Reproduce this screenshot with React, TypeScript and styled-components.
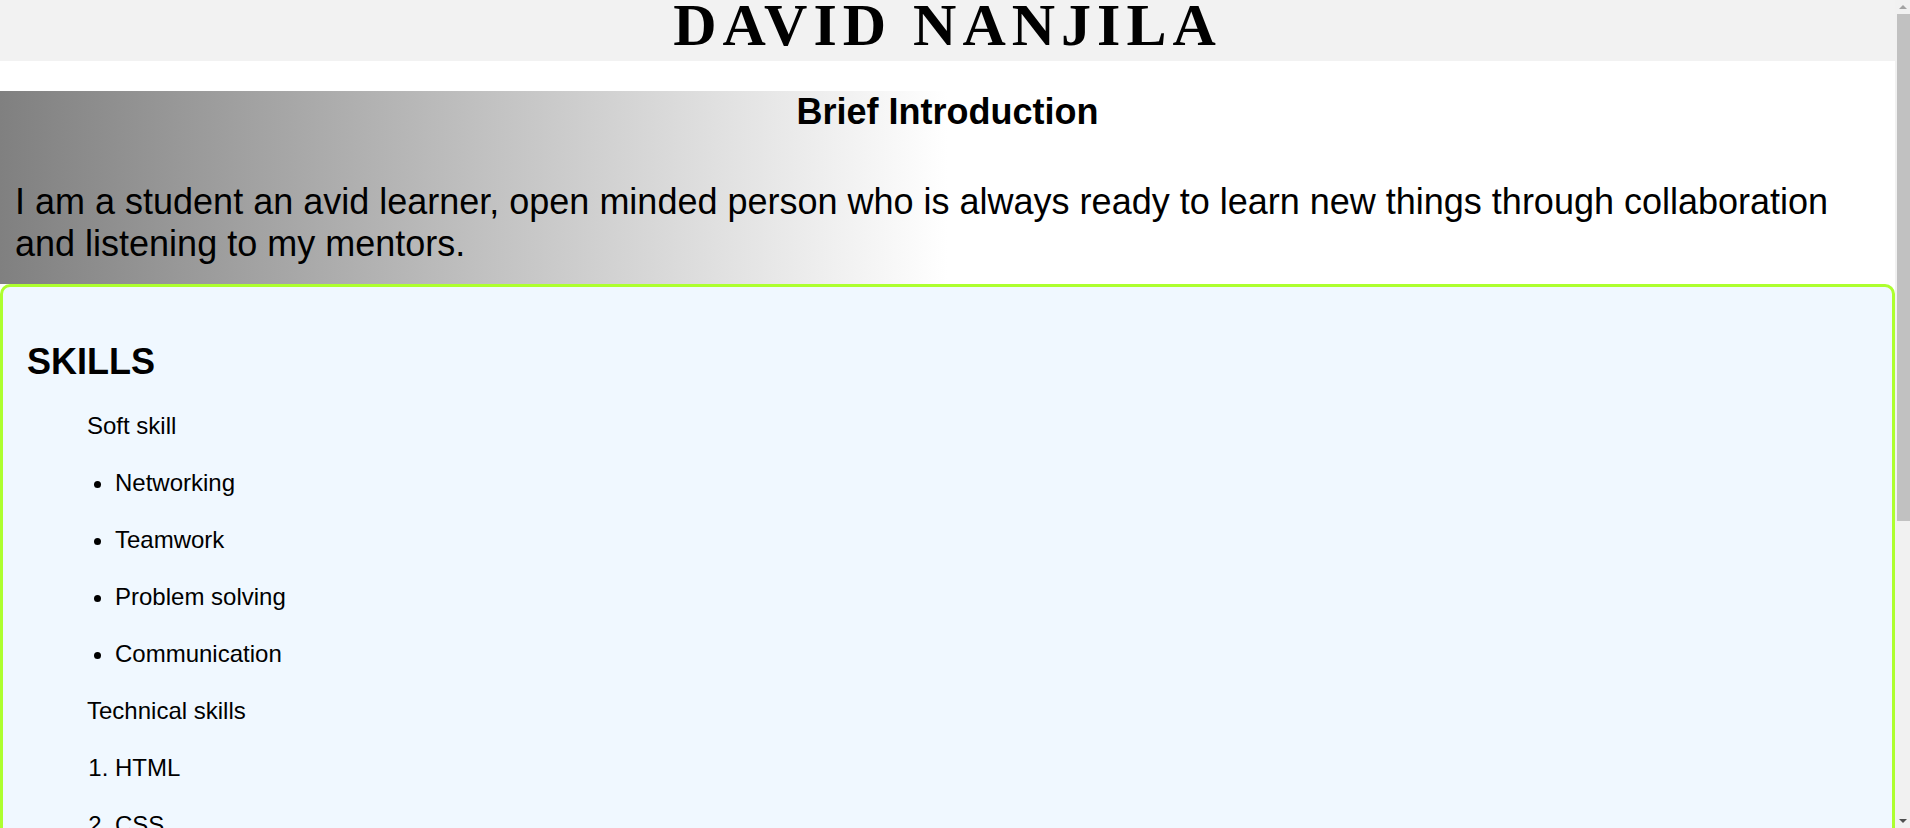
import React from "react";
import styled, { createGlobalStyle } from "styled-components";

const GlobalStyle = createGlobalStyle`
  html, body {
    margin: 0;
    padding: 0;
    background: #ffffff;
  }
  body {
    font-family: "Liberation Sans", Arial, sans-serif;
    color: #000000;
  }
`;

const Page = styled.div`
  margin-right: 15px;
`;

const Header = styled.header`
  background: #f2f2f2;
  height: 61px;
  box-sizing: border-box;
  padding-bottom: 10px;
`;

const Name = styled.h1`
  margin: 0;
  font-family: "Liberation Serif", "Times New Roman", serif;
  font-weight: 700;
  font-size: 60px;
  line-height: 51px;
  letter-spacing: 6px;
  text-align: center;
`;

const Intro = styled.section`
  margin-top: 30px;
  padding-bottom: 19px;
  background: linear-gradient(to right, grey, white, white);
`;

const SectionTitle = styled.h2<{ $center?: boolean }>`
  margin: ${(p) => (p.$center ? "0" : "30px 0")};
  font-size: 36px;
  font-weight: 700;
  line-height: 41px;
  text-align: ${(p) => (p.$center ? "center" : "left")};
`;

const IntroText = styled.p`
  margin: 49px 0 0;
  padding: 0 12px 0 15px;
  font-size: 36px;
  line-height: 42px;
`;

const Card = styled.section`
  border: 3px solid greenyellow;
  border-radius: 10px;
  background: aliceblue;
  padding: 24px;
  overflow: hidden;
`;

const Label = styled.p`
  margin: 0 0 29px;
  padding-left: 60px;
  font-size: 24px;
  line-height: normal;
`;

const BulletList = styled.ul`
  margin: 0;
  padding-left: 88px;
  list-style: disc;
`;

const NumberList = styled.ol`
  margin: 0;
  padding-left: 88px;
`;

const Item = styled.li`
  margin: 0 0 29px;
  font-size: 24px;
  line-height: normal;
`;

/* Classic browser scrollbar, drawn because the reference shows one */
const ScrollRail = styled.aside`
  position: fixed;
  top: 0;
  right: 0;
  width: 15px;
  height: 100vh;
  background: #f1f1f1;
  display: flex;
  flex-direction: column;
`;

const ScrollButton = styled.div<{ $down?: boolean }>`
  height: 14px;
  flex: none;
  display: flex;
  align-items: center;
  justify-content: center;
  &::before {
    content: "";
    border-left: 4px solid transparent;
    border-right: 4px solid transparent;
    ${(p) =>
      p.$down ? "border-top: 4px solid #505050;" : "border-bottom: 4px solid #a3a3a3;"}
  }
`;

const ScrollTrack = styled.div`
  flex: 1;
  padding: 0 0 0 2px;
`;

const ScrollThumb = styled.div`
  height: 507px;
  background: #c1c1c1;
`;

const softSkills = ["Networking", "Teamwork", "Problem solving", "Communication"];
const techSkills = ["HTML", "CSS", "JavaScript"];

export default function App() {
  return (
    <>
      <GlobalStyle />
      <Page>
        <Header>
          <Name>DAVID NANJILA</Name>
        </Header>
        <Intro>
          <SectionTitle $center>Brief Introduction</SectionTitle>
          <IntroText>
            I am a student an avid learner, open minded person who is always ready to learn new
            things through collaboration and listening to my mentors.
          </IntroText>
        </Intro>
        <Card>
          <SectionTitle>SKILLS</SectionTitle>
          <Label>Soft skill</Label>
          <BulletList>
            {softSkills.map((s) => (
              <Item key={s}>{s}</Item>
            ))}
          </BulletList>
          <Label>Technical skills</Label>
          <NumberList>
            {techSkills.map((s) => (
              <Item key={s}>{s}</Item>
            ))}
          </NumberList>
        </Card>
      </Page>
      <ScrollRail aria-hidden>
        <ScrollButton />
        <ScrollTrack>
          <ScrollThumb />
        </ScrollTrack>
        <ScrollButton $down />
      </ScrollRail>
    </>
  );
}
